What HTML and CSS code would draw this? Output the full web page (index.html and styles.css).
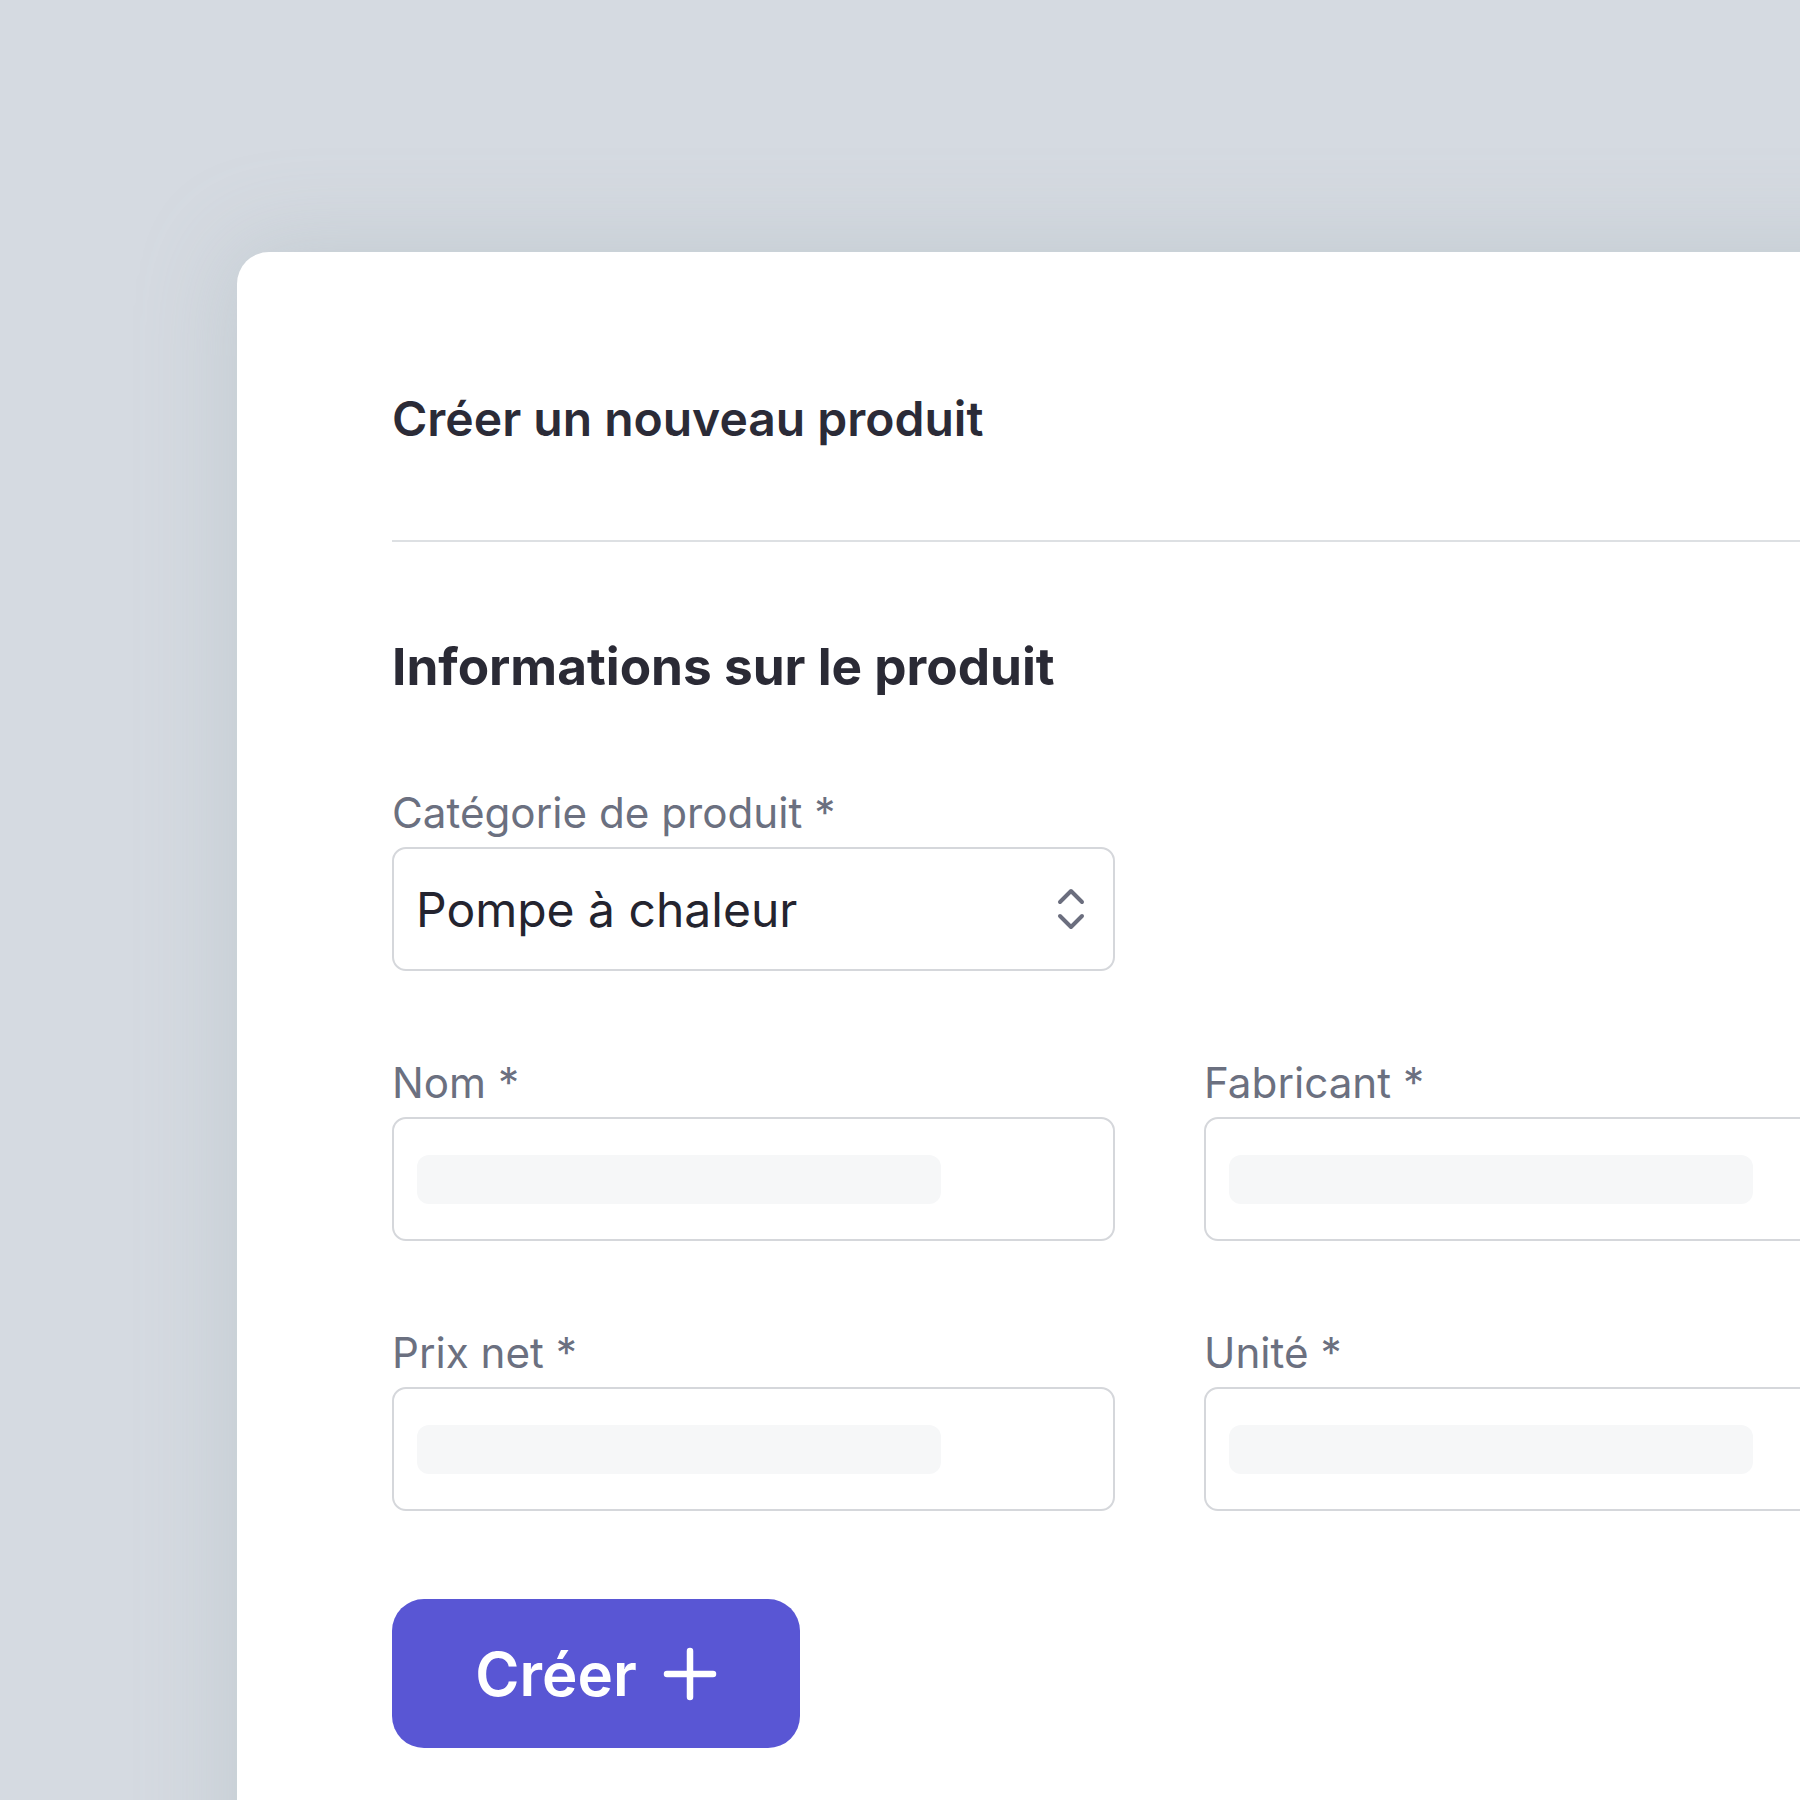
FILE: index.html
```html
<!DOCTYPE html>
<html lang="fr">
<head>
  <meta charset="utf-8">
  <title>Créer un nouveau produit</title>
  <link rel="stylesheet" href="styles.css">
</head>
<body>
  <div id="carte">
    <h1 class="titre">Créer un nouveau produit</h1>
    <hr class="separateur">

    <h2 class="sous-titre">Informations sur le produit</h2>

    <div class="champ">
      <label class="etiquette">Catégorie de produit *</label>
      <div class="selection">
        <span>Pompe à chaleur</span>
        <svg class="chevrons" width="32" height="44" viewBox="0 0 32 44">
          <path d="M5 15 L16 4 L27 15" />
          <path d="M5 29 L16 40 L27 29" />
        </svg>
      </div>
    </div>

    <div class="grille">
      <div class="champ">
        <label class="etiquette">Nom *</label>
        <div class="saisie"><div class="squelette"></div></div>
      </div>
      <div class="champ">
        <label class="etiquette">Fabricant *</label>
        <div class="saisie"><div class="squelette"></div></div>
      </div>
      <div class="champ">
        <label class="etiquette">Prix net *</label>
        <div class="saisie"><div class="squelette"></div></div>
      </div>
      <div class="champ">
        <label class="etiquette">Unité *</label>
        <div class="saisie"><div class="squelette"></div></div>
      </div>
    </div>

    <button class="bouton" type="button">
      Créer
      <svg width="54" height="54" viewBox="0 0 54 54">
        <path d="M27 4 V50 M4 27 H50" />
      </svg>
    </button>
  </div>
</body>
</html>
```

FILE: styles.css
```css
html, body {
  margin: 0;
  padding: 0;
  overflow: hidden;
}

body {
  background-color: #d5dae1;
  font-family: Inter, "Liberation Sans", sans-serif;
  height: 1800px;
}

#carte {
  margin: 252px 0 0 237px;
  width: 1800px;
  height: 1700px;
  padding: 143px 0 0 155px;
  background-color: #fff;
  border-radius: 32px 0 0 0;
  box-shadow: 0 0 90px 10px rgba(150, 168, 172, 0.28);
  box-sizing: border-box;
}

.titre {
  margin: 0;
  font-size: 48px;
  line-height: 48px;
  font-weight: 600;
  color: #2b2b37;
}

.separateur {
  margin: 97px 0 0 0;
  border: none;
  height: 2px;
  background-color: #dde0e3;
}

.sous-titre {
  margin: 99px 0 0 0;
  font-size: 51.3px;
  line-height: 50px;
  font-weight: 700;
  color: #2a2a35;
}

.champ {
  display: flex;
  flex-direction: column;
  gap: 14px;
  width: 723px;
}

.sous-titre + .champ {
  margin-top: 101px;
}

.etiquette {
  font-size: 42.2px;
  line-height: 41px;
  color: #6b7080;
}

.selection,
.saisie {
  height: 124px;
  border: 2px solid #d5d7db;
  border-radius: 14px;
  box-sizing: border-box;
  display: flex;
  align-items: center;
}

.selection {
  justify-content: space-between;
  padding: 0 26px 0 22px;
  font-size: 48px;
  color: #24242f;
}

.chevrons path {
  fill: none;
  stroke: #6b6e7e;
  stroke-width: 4;
  stroke-linecap: round;
  stroke-linejoin: round;
}

.saisie {
  padding-left: 23px;
}

.squelette {
  width: 524px;
  height: 49px;
  border-radius: 12px;
  background-color: #f6f7f8;
}

.grille {
  display: grid;
  grid-template-columns: 723px 723px;
  column-gap: 89px;
  row-gap: 91px;
  margin-top: 91px;
}

.bouton {
  margin-top: 88px;
  width: 408px;
  height: 149px;
  border: none;
  border-radius: 32px;
  background-color: #5956d4;
  color: #fff;
  font-family: Inter, "Liberation Sans", sans-serif;
  font-size: 60px;
  font-weight: 600;
  display: flex;
  align-items: center;
  justify-content: center;
  gap: 26px;
  padding: 0;
}

.bouton path {
  stroke: #fff;
  stroke-width: 6.5;
  stroke-linecap: round;
}
```
